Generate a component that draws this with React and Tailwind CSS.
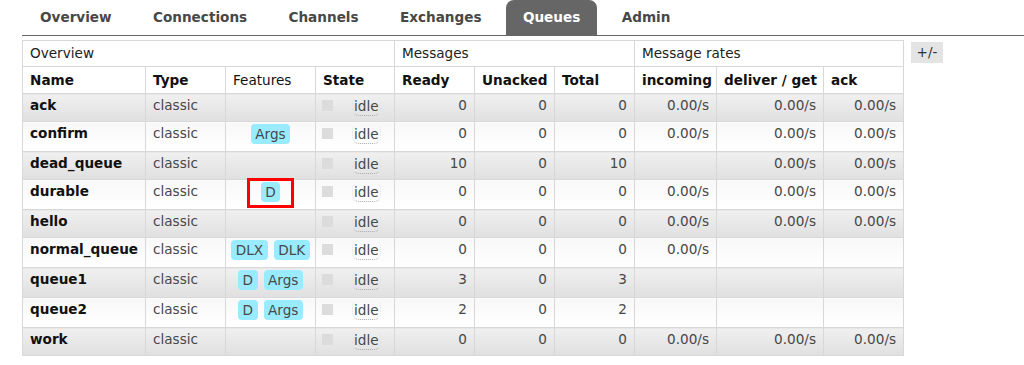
import React from "react";

const rows = [
  { name: "ack", f: [], r: [0, 0, 0], rates: ["0.00/s", "0.00/s", "0.00/s"] },
  { name: "confirm", f: ["Args"], r: [0, 0, 0], rates: ["0.00/s", "0.00/s", "0.00/s"] },
  { name: "dead_queue", f: [], r: [10, 0, 10], rates: ["", "0.00/s", "0.00/s"] },
  { name: "durable", f: ["D"], r: [0, 0, 0], rates: ["0.00/s", "0.00/s", "0.00/s"], mark: true },
  { name: "hello", f: [], r: [0, 0, 0], rates: ["0.00/s", "0.00/s", "0.00/s"] },
  { name: "normal_queue", f: ["DLX", "DLK"], r: [0, 0, 0], rates: ["0.00/s", "", ""] },
  { name: "queue1", f: ["D", "Args"], r: [3, 0, 3], rates: ["", "", ""] },
  { name: "queue2", f: ["D", "Args"], r: [2, 0, 2], rates: ["", "", ""] },
  { name: "work", f: [], r: [0, 0, 0], rates: ["0.00/s", "0.00/s", "0.00/s"] },
];

const tabs = ["Overview", "Connections", "Channels", "Exchanges", "Queues", "Admin"];

function Badge({ children }) {
  return (
    <span className="inline-block h-[20px] leading-[20px] px-[4.5px] rounded-[4px] bg-[#99ebff] text-[#484848]">
      {children}
    </span>
  );
}

export default function App() {
  const cell = "border border-[#d8d8d8] align-top p-0";
  return (
    <div
      className="w-[1024px] h-[365px] bg-white text-[13.6px] text-[#484848]"
      style={{ fontFamily: '"DejaVu Sans", Verdana, sans-serif' }}
    >
      <div className="ml-[22px] h-[36px] border-b border-[#666] flex items-end gap-[7.3px] pl-[1px]">
        {tabs.map((t) => (
          <div
            key={t}
            className={
              "h-[35px] px-[17px] flex items-center font-bold rounded-t-[8px] " +
              (t === "Queues" ? "bg-[#666] text-white" : "text-[#484848]")
            }
          >
            {t}
          </div>
        ))}
      </div>

      <div className="flex items-start ml-[22px] mt-[4px] gap-[7px]">
        <table className="table-fixed border-collapse w-[881px] border border-[#d8d8d8]">
          <colgroup>
            <col className="w-[123px]" />
            <col className="w-[80px]" />
            <col className="w-[90px]" />
            <col className="w-[79px]" />
            <col className="w-[80px]" />
            <col className="w-[80px]" />
            <col className="w-[80px]" />
            <col className="w-[82px]" />
            <col className="w-[107px]" />
            <col className="w-[80px]" />
          </colgroup>
          <thead>
            <tr className="h-[26px] bg-white">
              <th colSpan={4} className="border border-[#d8d8d8] text-left font-normal px-[7px] text-[#222]">
                Overview
              </th>
              <th colSpan={3} className="border border-[#d8d8d8] text-left font-normal px-[7px] text-[#222]">
                Messages
              </th>
              <th colSpan={3} className="border border-[#d8d8d8] text-left font-normal px-[7px] text-[#222]">
                Message rates
              </th>
            </tr>
            <tr className="h-[27px] bg-white text-[#111]">
              {["Name", "Type", "Features", "State", "Ready", "Unacked", "Total", "incoming", "deliver / get", "ack"].map(
                (h) => (
                  <th
                    key={h}
                    className={
                      "border border-[#d8d8d8] text-left px-[7px] whitespace-nowrap " +
                      (h === "Features" ? "font-normal" : "font-bold")
                    }
                  >
                    {h}
                  </th>
                )
              )}
            </tr>
          </thead>
          <tbody>
            {rows.map((row, i) => {
              const alt = i % 2 === 0;
              const bg = alt
                ? "bg-gradient-to-b from-[#f0f0f0] to-[#e0e0e0]"
                : "bg-gradient-to-b from-[#f8f8f8] to-[#ffffff]";
              const h = row.f.length ? "h-[30px]" : "h-[28px]";
              return (
                <tr key={row.name} className={h}>
                  <td className={cell + " " + bg + " px-[7px] pt-[2px] leading-[18px] font-bold text-[#111] whitespace-nowrap"}>
                    {row.name}
                  </td>
                  <td className={cell + " " + bg + " px-[7px] pt-[2px] leading-[18px]"}>classic</td>
                  <td className={cell + " " + bg + " relative pt-[2px]"}>
                    <div className="flex justify-center gap-[6px]">
                      {row.f.map((b, k) => (
                        <Badge key={k}>{b}</Badge>
                      ))}
                    </div>
                    {row.mark && (
                      <div className="absolute left-[21px] top-[-2px] w-[47px] h-[30px] border-[3px] border-[#ff0000]" />
                    )}
                  </td>
                  <td className={cell + " " + bg + " pt-[2px] px-[6px]"}>
                    <div className="flex items-start">
                      <span className="inline-block w-[11px] h-[11px] mt-[4px] bg-[#dcdcdc]" />
                      <span className="ml-[19px] leading-[18px] px-[1px] border border-dotted border-[#e2e2e2] border-b-[#aaa] border-t-transparent rounded-[7px]">
                        idle
                      </span>
                    </div>
                  </td>
                  {row.r.map((n, k) => (
                    <td key={k} className={cell + " " + bg + " text-right px-[7px] pt-[2px] leading-[18px]"}>
                      {n}
                    </td>
                  ))}
                  {row.rates.map((r, k) => (
                    <td key={k} className={cell + " " + bg + " text-right px-[7px] pt-[2px] leading-[18px]"}>
                      {r}
                    </td>
                  ))}
                </tr>
              );
            })}
          </tbody>
        </table>
        <div className="mt-[2px] h-[21px] w-[32px] flex items-center justify-center bg-[#e4e4e4] text-[#333]">
          +/-
        </div>
      </div>
    </div>
  );
}
